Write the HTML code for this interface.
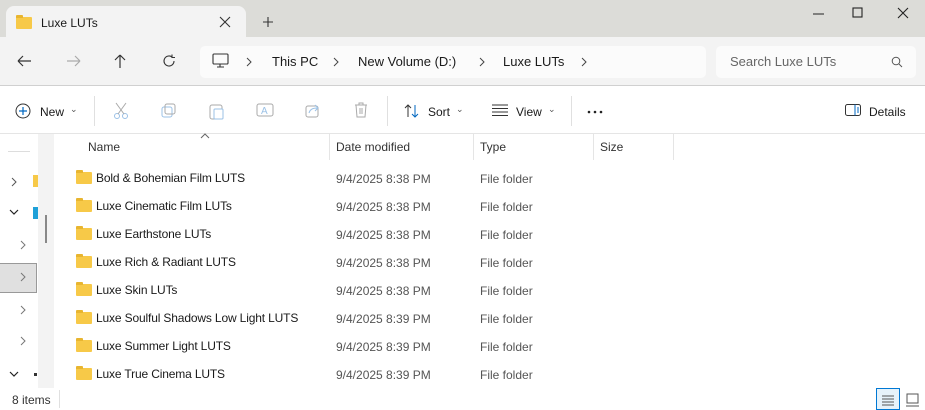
<!DOCTYPE html>
<html><head><style>
*{box-sizing:border-box;margin:0;padding:0}
body{width:925px;height:410px;overflow:hidden;background:#fff;font-family:"Liberation Sans",sans-serif;font-size:12px;color:#1a1a1a;position:relative}
.abs{position:absolute}
.title{left:0;top:0;width:925px;height:37px;background:#dcdcd8}
.tab{left:6px;top:6px;width:240px;height:32px;background:#f3f3f3;border-radius:8px 8px 0 0}
.nav{left:0;top:37px;width:925px;height:49px;background:#f3f3f3;border-bottom:1px solid #d0d0d0}
.crumb{left:200px;top:46px;width:506px;height:32px;background:#fbfbfb;border-radius:5px}
.search{left:716px;top:46px;width:200px;height:32px;background:#fbfbfb;border-radius:5px}
.t{position:absolute;white-space:nowrap}
.gray{color:#555}
svg{position:absolute}
.folder{position:absolute;width:16px;height:12px;background:#f7c948;border-radius:1px}
.folder:before{content:"";position:absolute;left:0;top:-2px;width:7px;height:3px;background:#e8b530;border-radius:1px 1px 0 0}
.n{letter-spacing:-0.15px}
</style></head><body>
<div class="abs title"></div>
<div class="abs tab"></div>
<div class="folder" style="left:16px;top:17px"></div>
<div class="t" style="left:41px;top:16px;font-size:12px">Luxe LUTs</div>
<svg style="left:219px;top:16px" width="12" height="12"><path d="M1 1L11 11M11 1L1 11" stroke="#333" stroke-width="1.1"/></svg>
<svg style="left:262px;top:16px" width="12" height="12"><path d="M6 1V11M1 6H11" stroke="#333" stroke-width="1.1"/></svg>
<svg style="left:813px;top:13px" width="12" height="2"><path d="M0 1H11" stroke="#222"/></svg>
<svg style="left:852px;top:7px" width="12" height="12"><rect x="1" y="1" width="9" height="9" fill="none" stroke="#222" stroke-width="1.1"/></svg>
<svg style="left:897px;top:7px" width="12" height="12"><path d="M1 1L11 11M11 1L1 11" stroke="#222" stroke-width="1.1"/></svg>
<div class="abs nav"></div>
<div class="abs crumb"></div>
<div class="abs search"></div>
<svg style="left:16px;top:54px" width="16" height="14"><path d="M2 7H15M2 7L7 2M2 7L7 12" stroke="#333" fill="none" stroke-width="1.2"/></svg>
<svg style="left:66px;top:54px" width="16" height="14"><path d="M14 7H1M14 7L9 2M14 7L9 12" stroke="#aaa" fill="none" stroke-width="1.2"/></svg>
<svg style="left:113px;top:53px" width="14" height="16"><path d="M7 15V2M7 2L2 7M7 2L12 7" stroke="#333" fill="none" stroke-width="1.2"/></svg>
<svg style="left:162px;top:54px" width="14" height="14"><path d="M12 7A5 5 0 1 1 10 3M10 0.5V3.5H13" stroke="#333" fill="none" stroke-width="1.1"/></svg>
<svg style="left:212px;top:53px" width="18" height="16"><rect x="1" y="1" width="15" height="10" rx="1" fill="none" stroke="#333" stroke-width="1.1"/><path d="M5 14H12M8 11V14" stroke="#333" stroke-width="1.1"/></svg>
<svg style="left:246px;top:57px" width="6" height="10"><path d="M1 1L5 5L1 9" stroke="#444" fill="none"/></svg>
<div class="t" style="left:272px;top:54px;font-size:13px">This PC</div>
<svg style="left:333px;top:57px" width="6" height="10"><path d="M1 1L5 5L1 9" stroke="#444" fill="none"/></svg>
<div class="t" style="left:358px;top:54px;font-size:13px">New Volume (D:)</div>
<svg style="left:479px;top:57px" width="6" height="10"><path d="M1 1L5 5L1 9" stroke="#444" fill="none"/></svg>
<div class="t" style="left:503px;top:54px;font-size:13px">Luxe LUTs</div>
<svg style="left:581px;top:57px" width="6" height="10"><path d="M1 1L5 5L1 9" stroke="#444" fill="none"/></svg>
<div class="t" style="left:730px;top:54px;font-size:13px;color:#666">Search Luxe LUTs</div>
<svg style="left:891px;top:56px" width="12" height="12"><circle cx="5" cy="5" r="3.8" fill="none" stroke="#555" stroke-width="1"/><path d="M8 8L11 11" stroke="#555"/></svg>
<!-- toolbar -->
<svg style="left:15px;top:103px" width="16" height="16"><circle cx="8" cy="8" r="7" fill="none" stroke="#333" stroke-width="1"/><path d="M8 4V12M4 8H12" stroke="#0067c0" stroke-width="1.2"/></svg>
<div class="t" style="left:40px;top:105px">New</div>
<div class="t gray" style="left:70px;top:104px;font-size:9px">⌄</div>
<div class="abs" style="left:94px;top:96px;width:1px;height:30px;background:#e0e0e0"></div>
<svg style="left:113px;top:102px" width="16" height="18"><circle cx="4" cy="14" r="2.5" fill="none" stroke="#9bc1e6"/><circle cx="12" cy="14" r="2.5" fill="none" stroke="#9bc1e6"/><path d="M3 1L11 12M13 1L5 12" stroke="#aaa"/></svg>
<svg style="left:161px;top:103px" width="16" height="16"><rect x="1" y="4" width="10" height="10" rx="2" fill="none" stroke="#9bc1e6"/><rect x="4" y="1" width="10" height="10" rx="2" fill="none" stroke="#aaa"/></svg>
<svg style="left:209px;top:102px" width="16" height="18"><rect x="1" y="3" width="12" height="14" rx="2" fill="none" stroke="#aaa"/><rect x="5" y="7" width="9" height="10" rx="1" fill="#fff" stroke="#9bc1e6"/></svg>
<svg style="left:256px;top:102px" width="18" height="16"><rect x="1" y="2" width="16" height="12" rx="2" fill="none" stroke="#aaa"/><text x="5" y="12" font-size="10" fill="#9bc1e6" font-family="Liberation Sans">A</text></svg>
<svg style="left:305px;top:102px" width="16" height="16"><rect x="1" y="4" width="12" height="11" rx="2" fill="none" stroke="#aaa"/><path d="M4 11C5 7 8 6 12 6M10 3L13 6L10 9" stroke="#9bc1e6" fill="none"/></svg>
<svg style="left:354px;top:102px" width="14" height="16"><path d="M1 3H13M5 3V1H9V3M2 3L3 15H11L12 3M6 6V12M8 6V12" stroke="#aaa" fill="none"/></svg>
<div class="abs" style="left:387px;top:96px;width:1px;height:30px;background:#e0e0e0"></div>
<svg style="left:404px;top:103px" width="16" height="16"><path d="M4 14V2M1 5L4 2L7 5" stroke="#333" fill="none"/><path d="M11 2V14M8 11L11 14L14 11" stroke="#0067c0" fill="none"/></svg>
<div class="t" style="left:428px;top:105px">Sort</div>
<div class="t gray" style="left:456px;top:104px;font-size:9px">⌄</div>
<svg style="left:492px;top:104px" width="16" height="12"><path d="M0 1H16M0 4.5H16M0 8H16M0 11.5H16" stroke="#333"/></svg>
<div class="t" style="left:516px;top:105px">View</div>
<div class="t gray" style="left:548px;top:104px;font-size:9px">⌄</div>
<div class="abs" style="left:571px;top:96px;width:1px;height:30px;background:#e0e0e0"></div>
<svg style="left:587px;top:110px" width="18" height="4"><circle cx="2" cy="2" r="1.3" fill="#222"/><circle cx="8" cy="2" r="1.3" fill="#222"/><circle cx="14" cy="2" r="1.3" fill="#222"/></svg>
<svg style="left:845px;top:104px" width="16" height="12"><rect x="0.5" y="0.5" width="15" height="11" rx="2" fill="none" stroke="#333"/><path d="M10 0.5V11.5" stroke="#0067c0"/><path d="M12 4H14M12 6H14M12 8H14" stroke="#0067c0"/></svg>
<div class="t" style="left:869px;top:105px">Details</div>
<div class="abs" style="left:0;top:133px;width:925px;height:1px;background:#e5e5e5"></div>
<!-- left pane -->
<div class="abs" style="left:8px;top:151px;width:22px;height:1px;background:#ddd"></div>
<div class="abs" style="left:38px;top:134px;width:16px;height:254px;background:#f3f3f3"></div>
<div class="abs" style="left:45px;top:215px;width:2px;height:28px;background:#888"></div>
<div class="abs" style="left:0;top:263px;width:37px;height:30px;background:#e0e0e0;border:1px solid #999;border-left:none"></div>
<svg style="left:11px;top:177px" width="6" height="10"><path d="M1 1L5 5L1 9" stroke="#555" fill="none"/></svg>
<svg style="left:9px;top:209px" width="10" height="6"><path d="M1 1L5 5L9 1" stroke="#222" fill="none" stroke-width="1.2"/></svg>
<svg style="left:20px;top:240px" width="6" height="10"><path d="M1 1L5 5L1 9" stroke="#777" fill="none"/></svg>
<svg style="left:20px;top:272px" width="6" height="10"><path d="M1 1L5 5L1 9" stroke="#777" fill="none"/></svg>
<svg style="left:20px;top:305px" width="6" height="10"><path d="M1 1L5 5L1 9" stroke="#777" fill="none"/></svg>
<svg style="left:20px;top:336px" width="6" height="10"><path d="M1 1L5 5L1 9" stroke="#777" fill="none"/></svg>
<svg style="left:9px;top:371px" width="10" height="6"><path d="M1 1L5 5L9 1" stroke="#222" fill="none" stroke-width="1.2"/></svg>
<div class="abs" style="left:33px;top:175px;width:5px;height:12px;background:#f7c948"></div>
<div class="abs" style="left:33px;top:207px;width:5px;height:12px;background:#1ea0d8"></div>
<div class="abs" style="left:34px;top:373px;width:3px;height:3px;background:#333"></div>
<!-- header -->
<svg style="left:200px;top:133px" width="10" height="6"><path d="M1 5L5 1L9 5" stroke="#666" fill="none"/></svg>
<div class="t" style="left:88px;top:140px;color:#333">Name</div>
<div class="abs" style="left:329px;top:134px;width:1px;height:26px;background:#e5e5e5"></div>
<div class="t" style="left:336px;top:140px;color:#333">Date modified</div>
<div class="abs" style="left:473px;top:134px;width:1px;height:26px;background:#e5e5e5"></div>
<div class="t" style="left:480px;top:140px;color:#333">Type</div>
<div class="abs" style="left:593px;top:134px;width:1px;height:26px;background:#e5e5e5"></div>
<div class="t" style="left:600px;top:140px;color:#333">Size</div>
<div class="abs" style="left:673px;top:134px;width:1px;height:26px;background:#e5e5e5"></div>
<!-- rows -->
<div class="folder" style="left:76px;top:172px"></div><div class="t n" style="left:96px;top:171px">Bold &amp; Bohemian Film LUTS</div><div class="t gray" style="left:336px;top:172px">9/4/2025 8:38 PM</div><div class="t gray" style="left:480px;top:172px">File folder</div>
<div class="folder" style="left:76px;top:200px"></div><div class="t n" style="left:96px;top:199px">Luxe Cinematic Film LUTs</div><div class="t gray" style="left:336px;top:200px">9/4/2025 8:38 PM</div><div class="t gray" style="left:480px;top:200px">File folder</div>
<div class="folder" style="left:76px;top:228px"></div><div class="t n" style="left:96px;top:227px">Luxe Earthstone LUTs</div><div class="t gray" style="left:336px;top:228px">9/4/2025 8:38 PM</div><div class="t gray" style="left:480px;top:228px">File folder</div>
<div class="folder" style="left:76px;top:256px"></div><div class="t n" style="left:96px;top:255px">Luxe Rich &amp; Radiant LUTS</div><div class="t gray" style="left:336px;top:256px">9/4/2025 8:38 PM</div><div class="t gray" style="left:480px;top:256px">File folder</div>
<div class="folder" style="left:76px;top:284px"></div><div class="t n" style="left:96px;top:283px">Luxe Skin LUTs</div><div class="t gray" style="left:336px;top:284px">9/4/2025 8:38 PM</div><div class="t gray" style="left:480px;top:284px">File folder</div>
<div class="folder" style="left:76px;top:312px"></div><div class="t n" style="left:96px;top:311px">Luxe Soulful Shadows Low Light LUTS</div><div class="t gray" style="left:336px;top:312px">9/4/2025 8:39 PM</div><div class="t gray" style="left:480px;top:312px">File folder</div>
<div class="folder" style="left:76px;top:340px"></div><div class="t n" style="left:96px;top:339px">Luxe Summer Light LUTS</div><div class="t gray" style="left:336px;top:340px">9/4/2025 8:39 PM</div><div class="t gray" style="left:480px;top:340px">File folder</div>
<div class="folder" style="left:76px;top:368px"></div><div class="t n" style="left:96px;top:367px">Luxe True Cinema LUTS</div><div class="t gray" style="left:336px;top:368px">9/4/2025 8:39 PM</div><div class="t gray" style="left:480px;top:368px">File folder</div>
<!-- status -->
<div class="t" style="left:12px;top:393px;color:#333">8 items</div>
<div class="abs" style="left:59px;top:390px;width:1px;height:18px;background:#e0e0e0"></div>
<div class="abs" style="left:876px;top:388px;width:24px;height:22px;background:#e6f2fa;border:1px solid #0078d4"></div>
<svg style="left:882px;top:395px" width="12" height="12"><path d="M0 1H12M0 4H12M0 7H12M0 10H12" stroke="#555"/></svg>
<svg style="left:906px;top:393px" width="14" height="14"><rect x="1" y="1" width="11" height="9" fill="none" stroke="#555"/><path d="M0 13H13" stroke="#555"/></svg>
</body></html>
